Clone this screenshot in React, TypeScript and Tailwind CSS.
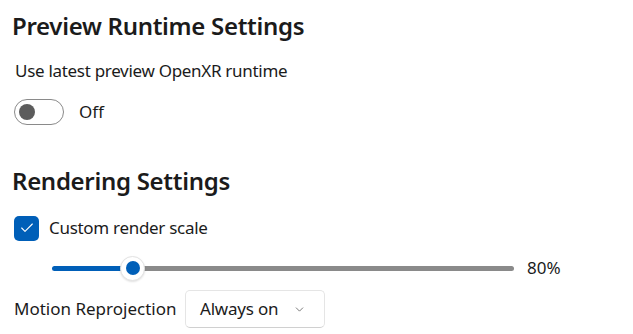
import { ChevronDown, Check } from "lucide-react";

const font = { fontFamily: '"Noto Sans", "Open Sans", sans-serif' };

export default function App() {
  return (
    <div
      className="w-[633px] h-[334px] bg-white text-[#1b1b1b] overflow-hidden pl-3 pt-[10px]"
      style={font}
    >
      <h2 className="text-[24px] font-semibold leading-[32px] tracking-[-0.3px]">Preview Runtime Settings</h2>

      <p className="mt-[17px] ml-[3px] text-[17px] leading-[24px] tracking-[-0.3px]">
        Use latest preview OpenXR runtime
      </p>

      {/* toggle */}
      <div className="mt-[15px] ml-[2px] flex items-center h-[27px]">
        <div className="w-[50px] h-[26px] rounded-full border border-[#8a8a8a] flex items-center pl-[4px]">
          <div className="w-[16px] h-[16px] rounded-full bg-[#5c5c5c]" />
        </div>
        <span className="ml-[15px] text-[17px] leading-[24px]">Off</span>
      </div>

      <h2 className="mt-[40px] text-[24px] font-semibold leading-[32px] tracking-[-0.3px]">Rendering Settings</h2>

      {/* checkbox */}
      <div className="mt-[18px] ml-[2px] flex items-center h-[26px]">
        <div className="w-[25px] h-[25px] rounded-[5px] bg-[#005fb8] flex items-center justify-center">
          <Check className="w-[16px] h-[16px] text-white" strokeWidth={1.6} />
        </div>
        <span className="ml-[10px] text-[17px] leading-[24px] tracking-[-0.3px]">Custom render scale</span>
      </div>

      {/* slider */}
      <div className="mt-[13px] ml-[40px] flex items-center h-[28px]">
        <div className="relative w-[462px] h-[5px] flex">
          <div className="w-[80px] h-full bg-[#005fb8] rounded-l-full" />
          <div className="flex-1 h-full bg-[#8a8a8a] rounded-r-full" />
          <div className="absolute left-[68px] top-[-10px] w-[25px] h-[25px] rounded-full bg-white border border-[#e3e3e3] shadow-[0_1px_2px_rgba(0,0,0,0.12)] flex items-center justify-center">
            <div className="w-[14px] h-[14px] rounded-full bg-[#005fb8]" />
          </div>
        </div>
        <span className="ml-[13px] text-[17px] leading-[24px]">80%</span>
      </div>

      {/* motion reprojection */}
      <div className="mt-[8px] ml-[2px] flex items-center h-[38px]">
        <span className="text-[17px] leading-[24px]">Motion Reprojection</span>
        <div className="ml-auto mr-[308px] w-[140px] h-[38px] rounded-[5px] border border-[#e5e5e5] border-b-[#d0d0d0] bg-white flex items-center pl-[14px] pr-[18px]">
          <span className="text-[17px] leading-[24px] tracking-[-0.2px]">Always on</span>
          <ChevronDown className="ml-auto w-[13px] h-[13px] text-[#5c5c5c]" strokeWidth={1.5} />
        </div>
      </div>
    </div>
  );
}
